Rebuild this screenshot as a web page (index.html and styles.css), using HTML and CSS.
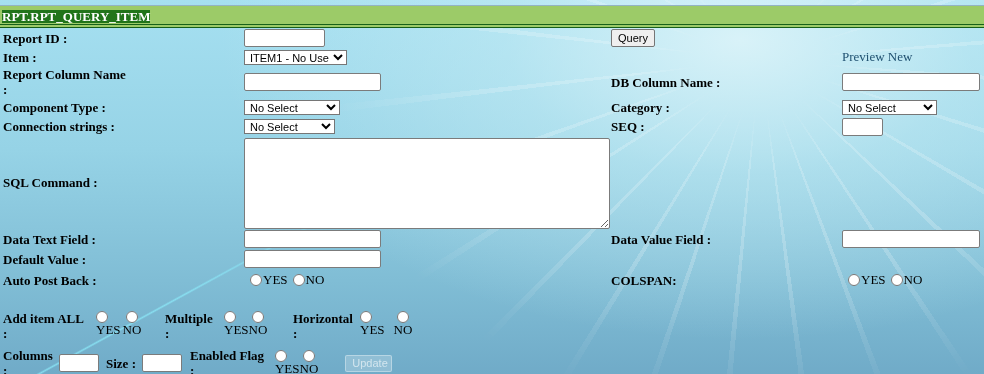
FILE: index.html
```html
<!DOCTYPE html>
<html>
<head>
    <meta charset="UTF-8">
    <meta name="viewport" content="width=device-width, initial-scale=1.0">
    <title>RPT.RPT_QUERY_ITEM</title>
    <link rel="stylesheet" href="styles.css">
</head>
<body>

    <div class="top_line"></div>
    <!--标题栏-->
    <div class="title_bar"><span class="title_text">RPT.RPT_QUERY_ITEM</span></div>

    <!--主表单-->
    <div class="form_grid">
        <div class="cell"><span class="lbl">Report ID :</span></div>
        <div class="cell"><input type="text" class="txt txt_id"></div>
        <div class="cell"><button class="btn btn_query">Query</button></div>
        <div class="cell"></div>

        <div class="cell"><span class="lbl">Item :</span></div>
        <div class="cell"><select class="sel sel_item"><option>ITEM1 - No Use</option></select></div>
        <div class="cell"></div>
        <div class="cell"><a class="preview_link">Preview New</a></div>

        <div class="cell"><span class="lbl">Report Column Name :</span></div>
        <div class="cell"><input type="text" class="txt txt_mid"></div>
        <div class="cell"><span class="lbl">DB Column Name :</span></div>
        <div class="cell"><input type="text" class="txt txt_long"></div>

        <div class="cell"><span class="lbl">Component Type :</span></div>
        <div class="cell"><select class="sel sel_comp"><option>No Select</option></select></div>
        <div class="cell"><span class="lbl">Category :</span></div>
        <div class="cell"><select class="sel sel_cat"><option>No Select</option></select></div>

        <div class="cell"><span class="lbl">Connection strings :</span></div>
        <div class="cell"><select class="sel sel_conn"><option>No Select</option></select></div>
        <div class="cell"><span class="lbl">SEQ :</span></div>
        <div class="cell"><input type="text" class="txt txt_seq"></div>

        <div class="cell"><span class="lbl">SQL Command :</span></div>
        <div class="cell"><textarea class="sql_box"></textarea></div>
        <div class="cell"></div>
        <div class="cell"></div>

        <div class="cell"><span class="lbl">Data Text Field :</span></div>
        <div class="cell"><input type="text" class="txt txt_mid"></div>
        <div class="cell"><span class="lbl">Data Value Field :</span></div>
        <div class="cell"><input type="text" class="txt txt_long"></div>

        <div class="cell"><span class="lbl">Default Value :</span></div>
        <div class="cell"><input type="text" class="txt txt_mid"></div>
        <div class="cell"></div>
        <div class="cell"></div>

        <div class="cell"><span class="lbl">Auto Post Back :</span></div>
        <div class="cell radio_line">
            <input type="radio" name="auto_post"><span>YES</span>
            <input type="radio" name="auto_post"><span>NO</span>
        </div>
        <div class="cell"><span class="lbl">COLSPAN:</span></div>
        <div class="cell radio_line">
            <input type="radio" name="colspan"><span>YES</span>
            <input type="radio" name="colspan"><span>NO</span>
        </div>
    </div>

    <!--选项行-->
    <div class="opt_row">
        <div class="opt_group group_all">
            <span class="lbl opt_lbl lbl_all">Add item ALL :</span>
            <div class="opts">
                <label class="opt opt_yes"><input type="radio" name="add_all"><span>YES</span></label>
                <label class="opt opt_no"><input type="radio" name="add_all"><span>NO</span></label>
            </div>
        </div>
        <div class="opt_group group_multi">
            <span class="lbl opt_lbl lbl_multi">Multiple :</span>
            <div class="opts">
                <label class="opt opt_yes"><input type="radio" name="multiple"><span>YES</span></label>
                <label class="opt opt_no"><input type="radio" name="multiple"><span>NO</span></label>
            </div>
        </div>
        <div class="opt_group group_horiz">
            <span class="lbl opt_lbl lbl_horiz">Horizontal :</span>
            <div class="opts opts_wide">
                <label class="opt opt_yes"><input type="radio" name="horizontal"><span>YES</span></label>
                <label class="opt opt_no"><input type="radio" name="horizontal"><span>NO</span></label>
            </div>
        </div>
    </div>

    <div class="col_row">
        <span class="lbl opt_lbl lbl_cols">Columns :</span>
        <input type="text" class="txt txt_small">
        <span class="lbl lbl_size">Size :</span>
        <input type="text" class="txt txt_small">
        <span class="lbl opt_lbl lbl_flag">Enabled Flag :</span>
        <div class="opts opts_flag">
            <label class="opt opt_yes"><input type="radio" name="enabled"><span>YES</span></label>
            <label class="opt opt_no"><input type="radio" name="enabled"><span>NO</span></label>
        </div>
        <button class="btn btn_update" disabled>Update</button>
    </div>

</body>
</html>
```

FILE: styles.css
```css
/*全局样式*/
* {padding:0px;margin:0px;box-sizing:border-box;}
html,body {width:100%;height:100%;}

body {
    font-family:"Liberation Serif","Times New Roman",serif;
    font-size:13px;color:#000;overflow:hidden;
    background-color:#8ccade;
    background-image:
        radial-gradient(ellipse 520px 300px at 740px 40px, rgba(226,246,250,0.85) 0%, rgba(200,237,245,0.5) 45%, rgba(200,237,245,0) 100%),
        linear-gradient(180deg,#a6e0f1 0%,#96d3e6 40%,#80bdd5 75%,#70abc8 100%);
}
/*放射光线*/
body::before {
    content:"";position:fixed;top:0;left:0;right:0;bottom:0;z-index:-1;
    background:repeating-conic-gradient(from 94deg at 760px 60px, rgba(255,255,255,0.2) 0deg 1deg, rgba(255,255,255,0) 1deg 13deg);
    -webkit-mask-image:radial-gradient(ellipse 460px 380px at 760px 60px, transparent 60px, #000 130px, #000 260px, transparent 440px);
    mask-image:radial-gradient(ellipse 460px 380px at 760px 60px, transparent 60px, #000 130px, #000 260px, transparent 440px);
}
/*左下斜线*/
body::after {
    content:"";position:fixed;top:0;left:0;right:0;bottom:0;z-index:-1;
    background:linear-gradient(151.4deg, rgba(140,235,250,0) 43.2%, rgba(140,235,250,0.75) 43.4%, rgba(140,235,250,0) 43.6%);
    -webkit-mask-image:linear-gradient(to top, #000 0px, #000 80px, transparent 200px);
    mask-image:linear-gradient(to top, #000 0px, #000 80px, transparent 200px);
}

/*标题栏*/
.top_line {height:6px;border-bottom:1px solid #93b3c3;}
.title_bar {height:22px;background:#9ccb68;border-bottom:4px double #16601a;padding:3px 0 0 2px;}
.title_text {display:inline-block;line-height:13px;background:#21741a;color:#fff;font-weight:bold;font-size:13px;}

/*主表单*/
.form_grid {
    display:grid;padding-left:3px;
    grid-template-columns:241px 367px 231px 1fr;
    grid-template-rows:20px 18px 32px 19px 19px 93px 20px 20px 22px;
}
.cell {display:flex;align-items:center;}
.lbl {font-weight:bold;line-height:15px;max-width:128px;}
.preview_link {color:#1f5070;font-size:13px;}

.txt {height:18px;border:1px solid #7b7b7b;border-radius:2px;background:#fff;font:11px "Liberation Sans",Arial,sans-serif;}
.txt_id {width:81px;}
.txt_mid {width:137px;}
.txt_long {width:138px;}
.txt_seq {width:41px;}
.txt_small {width:40px;}

.sel {height:15px;border:1px solid #767676;border-radius:0;background:#fff;font:11px "Liberation Sans",Arial,sans-serif;padding:0 0 0 1px;color:#000;}
.sel_item {width:103px;}
.sel_comp {width:96px;}
.sel_conn {width:91px;}
.sel_cat {width:95px;}

.sql_box {width:366px;height:91px;border:1px solid #7b7b7b;border-radius:2px;background:#fff;margin-top:1px;}

.btn {height:18px;padding:0 6px;font:11px "Liberation Sans",Arial,sans-serif;border:1px solid #767676;border-radius:2px;background:#efefef;color:#000;}
.btn_update {height:17px;width:47px;margin-left:27px;background:rgba(255,255,255,0.22);border-color:rgba(255,255,255,0.35);color:rgba(255,255,255,0.6);}

/*单选按钮*/
input[type=radio] {width:12px;height:12px;margin:0;}
.radio_line input {margin:0 1px 0 6px;}
.radio_line input + span + input {margin-left:5px;}

/*选项行*/
.opt_row {display:flex;align-items:flex-start;margin-top:20px;padding-left:3px;}
.opt_group {display:flex;align-items:flex-start;}
.group_all {width:162px;}
.group_multi {width:128px;}
.opt_lbl {max-width:none;}
.lbl_all {width:86px;}
.lbl_multi {width:50px;}
.lbl_horiz {width:62px;}
.opts {display:flex;align-items:flex-start;}
.group_all .opts {margin-left:7px;gap:2px;}
.group_multi .opts {margin-left:9px;}
.group_horiz .opts {margin-left:5px;gap:9px;}
.opt {display:flex;flex-direction:column;align-items:center;}
.opt span {line-height:14px;}
.opt_yes input {margin-right:12px;}

.col_row {display:flex;align-items:center;padding-left:3px;margin-top:7px;}
.lbl_cols {width:52px;}
.col_row .lbl_cols + .txt {margin-left:4px;}
.lbl_size {margin:0 6px 0 7px;}
.lbl_flag {width:76px;margin-left:8px;}
.opts_flag {margin-left:9px;}
```
